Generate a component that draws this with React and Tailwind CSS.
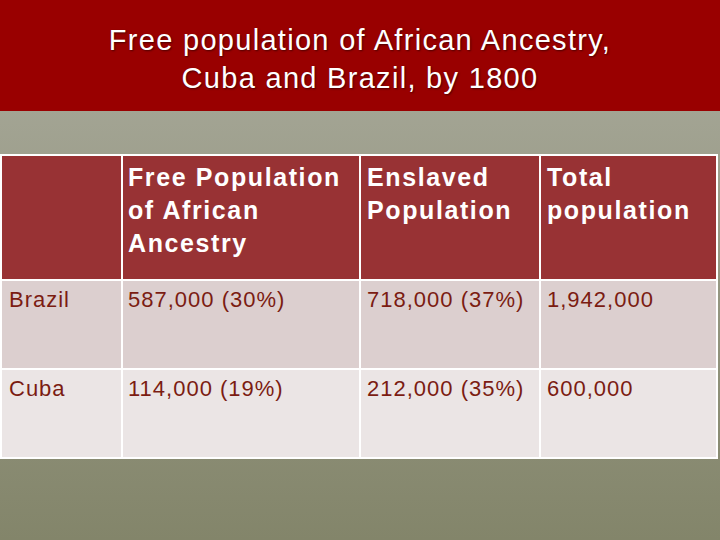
import React from "react";

const rows = [
	{ place: "Brazil", free: "587,000 (30%)", enslaved: "718,000 (37%)", total: "1,942,000", bg: "bg-[#dccfcf]" },
	{ place: "Cuba", free: "114,000 (19%)", enslaved: "212,000 (35%)", total: "600,000", bg: "bg-[#ebe5e5]" },
];

const App = () => {
	return (
		<div
			className="w-[720px] h-[540px] overflow-hidden flex flex-col bg-gradient-to-b from-[#abac9e] to-[#83856a]"
			style={{ fontFamily: '"Liberation Sans", Arial, sans-serif' }}
		>
			{/* title bar */}
			<div className="h-[111px] bg-[#990000] flex flex-col items-center justify-center pt-[6px] text-white text-[29px] leading-[38px] tracking-[1.3px] [text-shadow:1px_1px_2px_rgba(0,0,0,0.5)]">
				<div>Free population of African Ancestry,</div>
				<div>Cuba and Brazil, by 1800</div>
			</div>

			<div className="pt-[43px]">
				<table className="w-[718px] border-collapse">
					<thead>
						<tr className="bg-[#983234] text-white font-bold text-[25px] leading-[33px] tracking-[1.6px] h-[125px]">
							<th className="border-2 border-white w-[121px]"></th>
							<th className="border-2 border-white w-[238px] text-left align-top px-[5px] pt-[5px]">
								Free Population of African Ancestry
							</th>
							<th className="border-2 border-white w-[180px] text-left align-top px-[6px] pt-[5px]">
								Enslaved Population
							</th>
							<th className="border-2 border-white text-left align-top px-[6px] pt-[5px]">
								Total population
							</th>
						</tr>
					</thead>
					<tbody>
						{rows.map((r) => (
							<tr key={r.place} className={`${r.bg} text-[#7b1c12] text-[22px] leading-[26px] tracking-[1px] h-[89px]`}>
								<td className="border-2 border-white align-top px-[7px] pt-[6px]">{r.place}</td>
								<td className="border-2 border-white align-top px-[5px] pt-[6px]">{r.free}</td>
								<td className="border-2 border-white align-top px-[6px] pt-[6px]">{r.enslaved}</td>
								<td className="border-2 border-white align-top px-[6px] pt-[6px]">{r.total}</td>
							</tr>
						))}
					</tbody>
				</table>
			</div>
		</div>
	);
};

export default App;
